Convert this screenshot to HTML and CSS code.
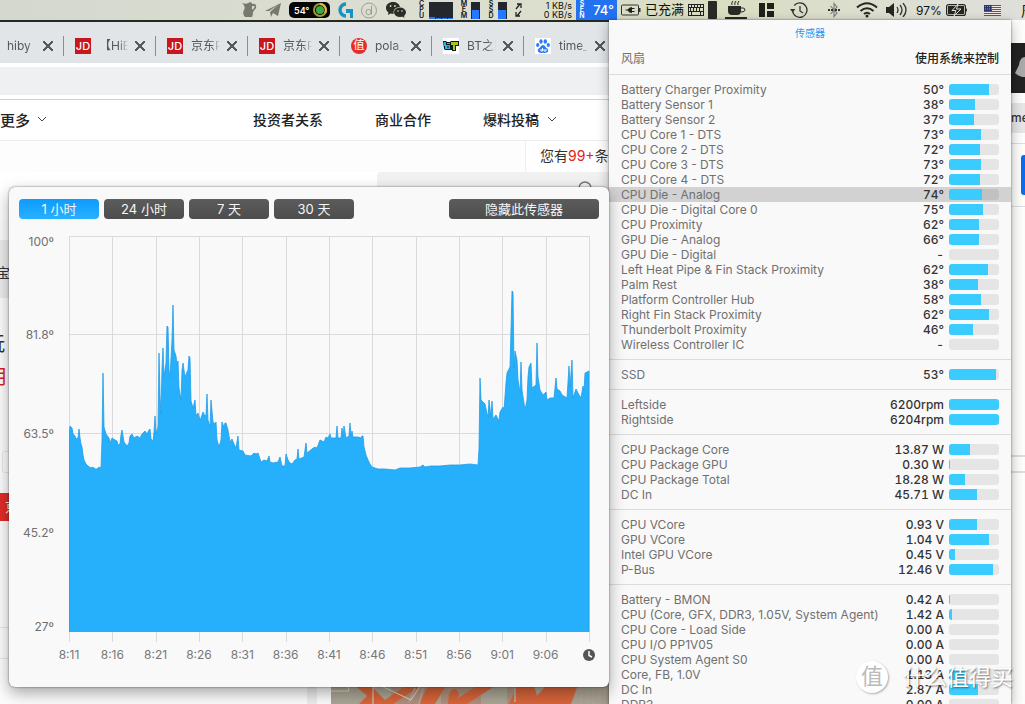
FILE: index.html
```html
<!DOCTYPE html>
<html lang="zh-CN">
<head>
<meta charset="utf-8">
<title>传感器</title>
<link rel="stylesheet" href="styles.css">
</head>
<body>
<div class="desktop">
  <header class="menubar">
    <svg class="after-8" width="16" height="18" viewBox="0 0 16 18"><path d="M1 2Q6 4 9 1l2 1v1q5-1 4 4l-3 4q0 3-1 5H4Q1 13 3 9 5 5 1 2Zm10 3v4q3-2 2.500-4Z" fill="#77786f" fill-rule="evenodd"/></svg>
    <svg class="after-8" width="16" height="16" viewBox="0 0 16 16"><path d="M0 9 16 1 13 14 8 11 6 15 5 10 13 3 4 9Z" fill="#77786f"/></svg>
    <span class="pill after-8">54°<svg width="15" height="15" viewBox="0 0 15 15"><circle cx="7" cy="7" r="6" fill="none" stroke="#a09a35" stroke-width="2"/><path d="M7 1a6 6 0 0 1 5 9" fill="none" stroke="#e8b93c" stroke-width="2"/><circle cx="7" cy="7" r="4" fill="#3cab45"/></svg></span>
    <svg class="after-8" width="15" height="16" viewBox="0 0 15 16"><path d="M8 2a6 6 0 1 0 0 12" fill="none" stroke="#1693c4" stroke-width="3.4"/><path d="M8 7h7v9h-3v-5H8Z" fill="#1693c4"/></svg>
    <svg class="after-8" width="17" height="17" viewBox="0 0 17 17"><circle cx="8" cy="8.500" r="7.500" fill="none" stroke="#9b9d93"/><circle cx="7.500" cy="10" r="2.600" fill="none" stroke="#9b9d93"/><path d="M10.500 3.500v9" stroke="#9b9d93"/></svg>
    <svg class="after-12" width="20" height="16" viewBox="0 0 20 16"><path d="M7 0C3 0 0 2.500 0 6c0 2 1 3.500 2.400 4.400L2 13l2.600-1.500 3 .4C7 7.500 10 5 14 5 13.500 2 10.500 0 7 0Z" fill="#2c2d27"/><ellipse cx="14" cy="10.300" rx="6" ry="4.800" fill="#2c2d27"/><path d="m16 14 2.400 2-.4-3Z" fill="#2c2d27"/><g fill="#d9dbcf"><circle cx="4.600" cy="4" r=".9"/><circle cx="9" cy="4" r=".9"/><circle cx="12" cy="9" r=".8"/><circle cx="16" cy="9" r=".8"/></g></svg>
    <span class="stack cpu after-4"><b>C</b><b>P</b><b>U</b></span>
    <svg class="after-8" width="24" height="17" viewBox="0 0 24 17"><path d="M0 0h24v17H0Z" fill="#24272b"/><path d="M0 15h6v2H0Zm7 1h5v1H7Zm6 0h5v1h-5Zm6 0h5v1h-5Z" fill="#2478ff"/></svg>
    <span class="stack after-4"><b>M</b><b>E</b><b>M</b></span>
    <svg class="after-8" width="9" height="17" viewBox="0 0 9 17"><path d="M0 0h9v17H0Z" fill="#24272b"/><path d="M1 8h7v9H1Z" fill="#2478ff"/></svg>
    <span class="stack after-4"><b>S</b><b>S</b><b>D</b></span>
    <svg class="after-8" width="9" height="17" viewBox="0 0 9 17"><path d="M0 0h9v17H0Z" fill="#24272b"/><path d="M0 8h8v9H0Z" fill="#2478ff"/></svg>
    <svg class="after-4" width="7" height="14" viewBox="0 0 7 14"><path d="M1 6 5 1M2 1h4v4M6 8 2 13M1 9v4h4" fill="none" stroke="#222" stroke-width="1.300"/></svg>
    <span class="rates after-4"><span>1 KB/s</span><span>0 KB/s</span></span>
    <span class="active after-4"><span class="stack"><b>S</b><b>E</b><b>N</b></span><span>74°</span></span>
    <svg class="after-4" width="20" height="12" viewBox="0 0 20 12"><rect x=".5" y="1" width="17" height="10" rx="1" fill="none" stroke="#333"/><path d="M18 4h1.500v4H18Z" fill="#333"/><path d="M4.500 5.500h2Q8 3 11 3v1h2.500v1H11v2h2.500v1H11v1Q8 9 6.500 6.500h-2Z" fill="#222"/></svg>
    <span class="charge after-4">已充满</span>
    <svg class="after-4" width="16" height="12" viewBox="0 0 16 12"><rect x=".5" y=".5" width="15" height="11" fill="none" stroke="#222"/><path d="M0 3.500h16M0 7.500h16M3.500 0v4M6.500 0v4M9.500 0v4M12.500 0v4M2.500 4v4M5.500 4v4M8.500 4v4M11.500 4v4M3.500 8v4M12.500 8v4" stroke="#222" fill="none"/></svg>
    <svg class="after-8" width="9" height="18" viewBox="0 0 9 18"><rect width="9" height="18" rx="1" fill="#292a25"/></svg>
    <svg class="after-12" width="22" height="18" viewBox="0 0 22 18"><path d="M3 5h13v5q0 4-4 4H7q-4 0-4-4ZM0 16h22v2H0Z" fill="#2a2b24"/><path d="M16 7h2q2 0 2 2t-4 2M7 4Q6 2 8 0M10 4Q9 2 11 0M13 4q-1-2 1-4" fill="none" stroke="#2a2b24"/></svg>
    <svg class="after-16" width="15" height="14" viewBox="0 0 15 14"><path d="M0 0h6v14H0ZM8 0h7v6H8Zm0 8h7v6H8Z" fill="#1f201c"/></svg>
    <svg class="after-20" width="18" height="17" viewBox="0 0 18 17"><path d="M2.600 9a7.200 7.200 0 1 0 1.600-5.500M10 4v5l3 2" fill="none" stroke="#333" stroke-width="1.300"/><path d="M0 7h5.400L2.600 10.500Z" fill="#333"/></svg>
    <svg class="after-16" width="12" height="16" viewBox="0 0 12 16"><path d="M2.500 4 9 11l-3 3.500v-13L9 5l-6.500 7" fill="none" stroke="#777" stroke-width="1.100"/><path d="M0 7h2v2H0Zm3 0h2v2H3Zm4 0h2v2H7Zm3 0h2v2h-2Z" fill="#333"/></svg>
    <svg class="after-8" width="22" height="16" viewBox="0 0 22 16"><path d="M1 5.500q10-8.500 20 0M4.500 9q6.500-5.500 13 0M8 12q3-2.500 6 0" fill="none" stroke="#252622" stroke-width="2"/><circle cx="11" cy="14" r="1.500" fill="#252622"/></svg>
    <svg class="after-8" width="22" height="14" viewBox="0 0 22 14"><path d="M0 4h3l5-4v14l-5-4H0Z" fill="#252622"/><path d="M11 4q2 3 0 6M14 2q4 5 0 10M17 0q6 7 0 14" fill="none" stroke="#333" stroke-width="1.300"/></svg>
    <span class="percent after-4">97%</span>
    <svg class="after-16" width="22" height="12" viewBox="0 0 22 12"><rect x=".6" y=".6" width="18.800" height="10.800" rx="2" fill="none" stroke="#252622" stroke-width="1.200"/><path d="M2 2h16v8H2Z" fill="#252622"/><path d="M20 4q2 2 0 4Z" fill="#252622"/><path d="m12 0-6 6.500h4L8 12l7-7h-4.500Z" fill="#252622" stroke="#dddfd0"/></svg>
    <svg class="after-20" width="17" height="11" viewBox="0 0 17 11"><path d="M0 0h17v11H0Z" fill="#f0e8e4"/><path d="M0 .5h17M0 2.500h17M0 4.500h17M0 6.500h17M0 8.500h17M0 10.500h17" stroke="#b5333f"/><path d="M0 0h8v6H0Z" fill="#2d356e"/><path d="M1 1.500h7M1 4h7" stroke="#9298b8" stroke-dasharray="1 1"/></svg>
    <span class="weekday">周</span>
  </header>

  <main class="browser">
    <div class="tabs">
      <div class="tab tab-cut"><span class="tab-title">hiby 评</span><button class="close" aria-label="关闭"></button></div>
      <div class="tab"><span class="fav jd">JD</span><span class="tab-title">【HiBy】</span><button class="close" aria-label="关闭"></button></div>
      <div class="tab"><span class="fav jd">JD</span><span class="tab-title">京东PLUS</span><button class="close" aria-label="关闭"></button></div>
      <div class="tab"><span class="fav jd">JD</span><span class="tab-title">京东PLUS</span><button class="close" aria-label="关闭"></button></div>
      <div class="tab"><span class="fav zhi">值</span><span class="tab-title">pola_搜</span><button class="close" aria-label="关闭"></button></div>
      <div class="tab"><svg class="fav" viewBox="0 0 16 16"><path d="M0 0h16v16H0Z" fill="#fff"/><path d="M0 3h3l1 1h3l1-1h8v5h-3v5H9v-1H2l-1-1Z" fill="#16191c"/><path d="M1 4h2v3h4v4H2V8H1Zm3 1h3v1H4Z" fill="#25b4ea"/><path d="M4 9h2" stroke="#16191c"/><path d="M8 4h7v3h-3v5h-2V7H8Z" fill="#a6c814"/></svg><span class="tab-title">BT之家</span><button class="close" aria-label="关闭"></button></div>
      <div class="tab"><svg class="fav" viewBox="0 0 16 16"><path d="M0 0h16v16H0Z" fill="#fff"/><g fill="#2a7bf6"><ellipse cx="6" cy="3.500" rx="1.700" ry="2.300"/><ellipse cx="10.300" cy="3.500" rx="1.700" ry="2.300"/><ellipse cx="2.700" cy="7" rx="1.600" ry="2.100"/><ellipse cx="13.300" cy="7" rx="1.600" ry="2.100"/><path d="M8 7q2 0 3 2.500 3 2 2 4-1 2-5 1.200-4 .8-5-1.200-1-2 2-4Q6 7 8 7Z"/></g><path d="M6 11v2h1.500v-3M9 11v2h2v-2" stroke="#fff" fill="none"/></svg><span class="tab-title">time_百</span><button class="close" aria-label="关闭"></button></div>
    </div>
    <div class="toolbar"><div class="bookmarks"></div></div>
    <nav class="site-nav">
      <a class="more" href="#">更多</a>
      <svg class="more-arrow" width="10" height="6" viewBox="0 0 10 6"><path d="m1 1 4 4 4-4" fill="none" stroke="#444"/></svg>
      <a class="nav-link" href="#">投资者关系</a>
      <a class="nav-link" href="#">商业合作</a>
      <a class="nav-link last" href="#">爆料投稿</a>
      <svg width="10" height="6" viewBox="0 0 10 6"><path d="m1 1 4 4 4-4" fill="none" stroke="#444"/></svg>
    </nav>
    <div class="notice-row"><p class="notice">您有<em>99+</em>条消息</p></div>
    <div class="search-panel"><svg width="18" height="18" viewBox="0 0 18 18"><circle cx="8" cy="8" r="6" fill="none" stroke="#777" stroke-width="1.500"/><path d="m12 12 5 5" stroke="#777" stroke-width="1.500"/></svg></div>
    <div class="feed">
      <aside class="feed-side">
        <p class="tag">宝</p>
        <p class="headline">玩</p>
        <p class="headline red">用</p>
        <p class="outline"></p>
        <p class="shop">京东</p>
        <p class="stub"></p>
      </aside>
      <div class="feed-rule"></div>
      <svg class="photo" viewBox="0 0 290 60" preserveAspectRatio="xMidYMax slice"><path d="M0 0h290v60H0Z" fill="#aaa595"/><path d="M60 40h40v20H60ZM110 40h40v20h-40ZM176 40h24v20h-24Z" fill="#b08f7c"/><path d="M20 38h26l-4 6 12 12 26-18h16L62 60H28l8-8ZM98 40h18l-12 20H88ZM152 38h18l-34 22h-18ZM178 60l10-22h14l4 14 12-14h20l-6 22ZM278 38h12v22h-10Z" fill="#d8653b"/><path d="M118 50q6-10 10 0l-3 10h-8ZM210 60l14-22h24l-8 22Z" fill="#d8653b"/><path d="M250 40v20M256 40v18M262 40v20M268 40v16M274 40v20M84 44l-6 14M92 44l-4 16M184 44v14" fill="none" stroke="#b5a493" stroke-width="2"/><path d="M0 47h18l-2-10M46 40l34 16 12-18M42 40v20" fill="none" stroke="#ddd8c8"/></svg>
    </div>
  </main>

  <aside class="side-window">
    <div class="side-dark"><svg width="12" height="26" viewBox="0 0 12 26"><path d="M12 2Q7 2 6 10l-4 8q4 4 10 4Z" fill="#aaa"/></svg></div>
    <div class="side-chip">me</div>
    <div class="side-blue"><i></i></div>
    <div class="side-gap"></div>
    <div class="side-box"></div>
  </aside>

  <section class="sensors" aria-label="传感器">
    <h1>传感器</h1>
    <div class="fan"><span>风扇</span><strong>使用系统来控制</strong></div>
    <table>
      <tr><th scope="row">Battery Charger Proximity</th><td>50°</td><td><div class="bar"><i style="width:80%"></i></div></td></tr>
      <tr><th scope="row">Battery Sensor 1</th><td>38°</td><td><div class="bar"><i style="width:52%"></i></div></td></tr>
      <tr><th scope="row">Battery Sensor 2</th><td>37°</td><td><div class="bar"><i style="width:50%"></i></div></td></tr>
      <tr><th scope="row">CPU Core 1 - DTS</th><td>73°</td><td><div class="bar"><i style="width:64%"></i></div></td></tr>
      <tr><th scope="row">CPU Core 2 - DTS</th><td>72°</td><td><div class="bar"><i style="width:62%"></i></div></td></tr>
      <tr><th scope="row">CPU Core 3 - DTS</th><td>73°</td><td><div class="bar"><i style="width:64%"></i></div></td></tr>
      <tr><th scope="row">CPU Core 4 - DTS</th><td>72°</td><td><div class="bar"><i style="width:62%"></i></div></td></tr>
      <tr class="selected"><th scope="row">CPU Die - Analog</th><td>74°</td><td><div class="bar"><i style="width:66%"></i></div></td></tr>
      <tr><th scope="row">CPU Die - Digital Core 0</th><td>75°</td><td><div class="bar"><i style="width:68%"></i></div></td></tr>
      <tr><th scope="row">CPU Proximity</th><td>62°</td><td><div class="bar"><i style="width:60%"></i></div></td></tr>
      <tr><th scope="row">GPU Die - Analog</th><td>66°</td><td><div class="bar"><i style="width:60%"></i></div></td></tr>
      <tr><th scope="row">GPU Die - Digital</th><td>-</td><td><div class="bar"></div></td></tr>
      <tr><th scope="row">Left Heat Pipe &amp; Fin Stack Proximity</th><td>62°</td><td><div class="bar"><i style="width:78%"></i></div></td></tr>
      <tr><th scope="row">Palm Rest</th><td>38°</td><td><div class="bar"><i style="width:58%"></i></div></td></tr>
      <tr><th scope="row">Platform Controller Hub</th><td>58°</td><td><div class="bar"><i style="width:64%"></i></div></td></tr>
      <tr><th scope="row">Right Fin Stack Proximity</th><td>62°</td><td><div class="bar"><i style="width:80%"></i></div></td></tr>
      <tr><th scope="row">Thunderbolt Proximity</th><td>46°</td><td><div class="bar"><i style="width:48%"></i></div></td></tr>
      <tr><th scope="row">Wireless Controller IC</th><td>-</td><td><div class="bar"></div></td></tr>
    </table>
    <table>
      <tr><th scope="row">SSD</th><td>53°</td><td><div class="bar"><i style="width:94%"></i></div></td></tr>
    </table>
    <table>
      <tr><th scope="row">Leftside</th><td>6200rpm</td><td><div class="bar"><i style="width:100%"></i></div></td></tr>
      <tr><th scope="row">Rightside</th><td>6204rpm</td><td><div class="bar"><i style="width:100%"></i></div></td></tr>
    </table>
    <table>
      <tr><th scope="row">CPU Package Core</th><td>13.87 W</td><td><div class="bar"><i style="width:42%"></i></div></td></tr>
      <tr><th scope="row">CPU Package GPU</th><td>0.30 W</td><td><div class="bar"><i style="width:2%"></i></div></td></tr>
      <tr><th scope="row">CPU Package Total</th><td>18.28 W</td><td><div class="bar"><i style="width:32%"></i></div></td></tr>
      <tr><th scope="row">DC In</th><td>45.71 W</td><td><div class="bar"><i style="width:56%"></i></div></td></tr>
    </table>
    <table>
      <tr><th scope="row">CPU VCore</th><td>0.93 V</td><td><div class="bar"><i style="width:56%"></i></div></td></tr>
      <tr><th scope="row">GPU VCore</th><td>1.04 V</td><td><div class="bar"><i style="width:80%"></i></div></td></tr>
      <tr><th scope="row">Intel GPU VCore</th><td>0.45 V</td><td><div class="bar"><i style="width:12%"></i></div></td></tr>
      <tr><th scope="row">P-Bus</th><td>12.46 V</td><td><div class="bar"><i style="width:88%"></i></div></td></tr>
    </table>
    <table>
      <tr><th scope="row">Battery - BMON</th><td>0.42 A</td><td><div class="bar"><i style="width:2%"></i></div></td></tr>
      <tr><th scope="row">CPU (Core, GFX, DDR3, 1.05V, System Agent)</th><td>1.42 A</td><td><div class="bar"><i style="width:6%"></i></div></td></tr>
      <tr><th scope="row">CPU Core - Load Side</th><td>0.00 A</td><td><div class="bar"></div></td></tr>
      <tr><th scope="row">CPU I/O PP1V05</th><td>0.00 A</td><td><div class="bar"></div></td></tr>
      <tr><th scope="row">CPU System Agent S0</th><td>0.00 A</td><td><div class="bar"></div></td></tr>
      <tr><th scope="row">Core, FB, 1.0V</th><td>1.13 A</td><td><div class="bar"><i style="width:32%"></i></div></td></tr>
      <tr><th scope="row">DC In</th><td>2.87 A</td><td><div class="bar"><i style="width:58%"></i></div></td></tr>
      <tr><th scope="row">DDR3</th><td>0.00 A</td><td><div class="bar"></div></td></tr>
    </table>
  </section>

  <section class="history" aria-label="CPU Die - Analog">
    <div class="ranges">
      <button class="range on">1 小时</button>
      <button class="range">24 小时</button>
      <button class="range">7 天</button>
      <button class="range">30 天</button>
      <button class="range hide">隐藏此传感器</button>
    </div>
    <div class="chart">
      <div class="y-axis"><span>100º</span><span>81.8º</span><span>63.5º</span><span>45.2º</span><span>27º</span></div>
      <svg class="plot" viewBox="69 236 521 406" preserveAspectRatio="none">
        <path d="M69 236.500H590M69 334.500H590M69 433.500H590M69 532.500H590M69.500 236V642M112.500 236V642M156.500 236V642M199.500 236V642M242.500 236V642M286.500 236V642M329.500 236V642M372.500 236V642M416.500 236V642M459.500 236V642M502.500 236V642M546.500 236V642M589.500 236V642" fill="none" stroke="#dadada"/>
        <path d="M69 632V438L70 426 72 428 73 434 75 436 76 439 78 438 79 429 80 438 81 444 82 447 83 455 84 460 86 464 88 466 91 468 93 467 95 469 97 469 99 467 101 468 102 440 103 373 104 427 106 434 109 438 110 443 112 438 115 440 117 441 118 445 120 444 121 435 122 430 124 442 127 446 129 443 130 436 132 434 134 438 137 436 140 438 142 434 145 431 147 434 149 430 150 429 151 439 153 441 154 432 155 416 156 434 158 427 159 353 160 395 161 414 162 368 163 348 164 377 166 363 167 326 168 327 169 370 170 377 172 340 173 305 174 350 176 356 177 365 178 361 179 388 181 400 182 370 183 363 185 377 187 372 188 370 189 356 190 358 191 401 193 408 195 400 196 416 198 413 200 420 201 418 203 412 205 416 206 415 207 394 208 420 210 427 211 400 213 422 215 424 216 422 217 440 219 447 221 440 222 422 224 427 225 423 226 423 228 430 230 442 232 439 234 444 236 448 238 436 239 450 243 451 245 455 251 456 254 453 256 454 258 453 261 462 264 460 267 461 269 456 270 462 273 463 278 462 280 457 282 466 285 466 286 454 288 460 290 463 292 464 295 460 297 459 298 449 299 459 304 457 306 443 307 453 312 449 315 447 317 448 320 440 324 442 326 437 328 438 330 434 331 438 336 438 337 426 338 438 341 438 342 428 343 437 344 426 346 438 349 436 350 423 351 436 352 431 353 437 358 437 361 438 362 436 363 436 364 447 366 455 368 460 370 464 372 467 378 469 385 469 395 470 400 468 410 468 420 467 423 465 425 467 431 466 440 466 450 465 460 465 470 464 478 465 479 449 480 378 481 400 485 404 488 418 489 400 491 417 492 401 493 419 496 415 499 421 500 412 503 407 504 410 506 383 507 373 510 367 511 330 512 291 513 292 514 368 515 351 517 360 518 380 520 393 521 362 522 390 525 410 527 400 528 377 529 367 531 363 532 388 536 385 537 343 538 377 540 390 543 395 546 392 547 400 550 398 554 398 556 378 557 389 560 391 562 395 567 398 569 366 570 387 572 360 573 398 576 389 578 393 581 398 583 386 584 391 585 373 589 371V632" fill="#26b0fc" stroke="#1f9de8" stroke-width=".8"/>
      </svg>
    </div>
    <div class="x-axis"><span>8:11</span><span>8:16</span><span>8:21</span><span>8:26</span><span>8:31</span><span>8:36</span><span>8:41</span><span>8:46</span><span>8:51</span><span>8:56</span><span>9:01</span><span>9:06</span><span><svg width="12" height="12" viewBox="0 0 12 12"><circle cx="6" cy="6" r="6" fill="#555"/><path d="M6 2v4.500l3 1.500" fill="none" stroke="#fff" stroke-width="1.500"/></svg></span></div>
  </section>

  <div class="watermark"><span class="seal">值</span><span>什么值得买</span></div>
</div>
</body>
</html>
```

FILE: styles.css
```css
* { box-sizing: border-box; }
body { margin: 0; font-family: Inter, "Noto Sans CJK SC", sans-serif; font-size: 12px; color: #333; }
h1, p { margin: 0; font-weight: 400; }
a { color: inherit; text-decoration: none; }
button { border: 0; padding: 0; font: inherit; }
svg { display: block; flex: none; }

.desktop { position: relative; display: flex; flex-direction: column; height: 100vh; overflow: hidden; background: #26291d; }

/* Menu bar */
.menubar { display: flex; align-items: center; justify-content: flex-end; height: 20px; flex: none; overflow: hidden; color: #111; background: linear-gradient(90deg, #d5d8cf, #dcdfd0 45%, #d9dec3 70%, #dfdfdb); white-space: nowrap; }
.menubar > * { flex: none; }
.after-4 { margin-right: 4px; }
.after-8 { margin-right: 8px; }
.after-12 { margin-right: 12px; }
.after-16 { margin-right: 16px; }
.after-20 { margin-right: 20px; }
.pill { display: flex; align-items: center; justify-content: space-between; width: 41px; height: 16px; padding: 0 2px 0 5px; border-radius: 5px; background: #050505; color: #fff; font-size: 9px; font-weight: 600; }
.stack { display: flex; flex-direction: column; align-items: center; width: 6px; font-size: 7px; line-height: 6px; }
.stack.cpu { width: 7px; }
.stack b { font-weight: 600; }
.rates { display: flex; flex-direction: column; align-items: flex-end; width: 46px; font-size: 9px; line-height: 9px; }
.active { display: flex; align-items: center; justify-content: space-between; width: 41px; height: 20px; padding: 0 3px; background: #2272f2; color: #fff; font-size: 13px; font-weight: 500; }
.charge { font-size: 13px; line-height: 16px; padding-bottom: 2px; }
.percent { width: 26px; font-size: 12px; }
.weekday { width: 4px; overflow: hidden; font-size: 14px; }

/* Browser window */
.browser { display: flex; flex-direction: column; flex: 1; min-height: 0; margin-top: 2px; overflow: hidden; background: #fff; }
.tabs { display: flex; height: 41px; flex: none; padding-top: 14px; background: #e1e5e8; overflow: hidden; }
.tab { display: flex; align-items: center; flex: none; width: 92px; height: 20px; padding-left: 11px; border-right: 1px solid #888d91; }
.tab:last-child { border: 0; }
.tab-cut { width: 64px; padding-left: 7px; }
.fav { width: 16px; height: 16px; margin-right: 8px; flex: none; }
.jd { background: #c8161d; color: #fff; font-size: 11px; font-weight: 500; line-height: 16px; text-align: center; }
.zhi { border-radius: 50%; background: #e62d28; color: #fff; font-size: 11px; line-height: 15px; text-align: center; }
.tab-title { width: 29px; overflow: hidden; white-space: nowrap; color: #55595e; line-height: 18px; mask-image: linear-gradient(90deg, #000 70%, transparent); }
.close { width: 10px; height: 10px; margin-left: 7px; background: linear-gradient(45deg, transparent 43%, #555a5f 43% 57%, transparent 57%), linear-gradient(-45deg, transparent 43%, #555a5f 43% 57%, transparent 57%); }
.toolbar { flex: none; padding: 4px 0; border-bottom: 1px solid #cfcfcf; }
.bookmarks { height: 28px; background: #eef0f2; }
.site-nav { display: flex; align-items: center; flex: none; height: 41px; padding-bottom: 2px; border-bottom: 1px solid #eee; color: #222; font-size: 14px; font-weight: 500; white-space: nowrap; }
.more { width: 30px; font-size: 15px; }
.more-arrow { margin-left: 7px; margin-right: 206px; }
.nav-link { margin-right: 52px; }
.nav-link.last { margin-right: 8px; }
.notice-row { display: flex; flex: none; padding-left: 525px; background: #fdfdfd; }
.notice { flex: 1; height: 31px; padding-left: 14px; border-left: 1px solid #eee; background: #fff; font-size: 14px; line-height: 30px; white-space: nowrap; }
.notice em { color: #e2231a; font-style: normal; }
.search-panel { flex: none; height: 48px; margin-left: 377px; padding: 8px 0 0 200px; border-radius: 3px 0 0; background: #f1f1f1; }
.feed { display: flex; flex: 1; min-height: 0; padding-top: 20px; background: #fdfdfd; }
.feed-side { width: 307px; flex: none; overflow: hidden; }
.tag { height: 58px; padding-top: 22px; background: #ededed; font-size: 14px; text-indent: -4px; }
.headline { margin-top: 32px; font-size: 20px; line-height: 28px; text-indent: -15px; }
.headline.red { margin-top: 5px; color: #d71f1f; text-indent: -13px; }
.outline { height: 22px; margin: 60px 0 20px 2px; border: 1px solid #e8e8e8; border-radius: 3px; }
.shop { height: 28px; padding-left: 5px; background: #e12d27; color: #fff; font-size: 14px; line-height: 28px; }
.stub { height: 32px; margin-top: 106px; border: solid #e8e8e8; border-width: 1px 0; }
.feed-rule { width: 10px; background: #eee; flex: none; }
.photo { width: 290px; height: 60px; margin-left: 14px; align-self: flex-end; }

/* Window edge behind the sensor menu */
.side-window { position: absolute; top: 20px; right: 0; bottom: 0; width: 14px; padding-top: 23px; background: #fdfdfc; overflow: hidden; }
.side-dark { display: flex; align-items: center; justify-content: flex-end; height: 50px; background: #222; }
.side-chip { height: 30px; margin: 10px 0; background: #e6e6e6; font-weight: 500; line-height: 30px; }
.side-blue { height: 64px; padding: 11px 0 0 10px; border: solid #ddd; border-width: 1px 0; }
.side-blue i { display: block; height: 40px; border-radius: 3px 0 0 3px; background: #0a6cf0; }
.side-gap { height: 248px; border-top: 1px solid #fff; }
.side-box { height: 18px; border: solid #ddd; border-width: 2px 0; }

/* Sensor menu */
.sensors { position: absolute; top: 20px; right: 14px; bottom: 0; width: 402px; overflow: hidden; background: #f9f9f9; box-shadow: 0 0 2px rgba(0,0,0,.5), 0 4px 12px rgba(0,0,0,.3); }
.sensors h1 { padding-top: 6px; color: #1b9af7; font-size: 10px; line-height: 15px; text-align: center; }
.fan { display: flex; align-items: center; justify-content: space-between; height: 33px; padding: 0 12px; color: #707070; }
.fan strong { color: #222; font-size: 12px; font-weight: 500; }
.sensors table { display: flex; flex-direction: column; padding: 7px 0; border-top: 1px solid #dcdcdc; }
.sensors tbody { display: contents; }
.sensors tr { display: flex; align-items: center; gap: 5px; height: 15px; padding: 0 12px; white-space: nowrap; }
.sensors th { flex: 1; padding: 0; color: #707070; font-weight: 400; line-height: 15px; text-align: left; }
.sensors td { padding: 0; color: #333; font-weight: 500; font-variant-numeric: tabular-nums; line-height: 15px; }
.sensors .selected { background: #d2d2d2; }
.bar { width: 50px; height: 11px; border-radius: 3px; overflow: hidden; background: rgba(0,0,0,.08); }
.bar i { display: block; height: 11px; background: #3accff; }

/* History popover */
.history { position: absolute; top: 187px; left: 9px; right: 416px; padding: 12px 0 24px; border-radius: 6px; background: #f9f9f9; box-shadow: 0 0 2px rgba(0,0,0,.6), 0 6px 16px rgba(0,0,0,.35); }
.ranges { display: flex; gap: 5px; padding: 0 10px; }
.range { width: 80px; height: 20px; border-radius: 4px; background: linear-gradient(#5c5c5c, #4d4d4d); color: #f6f6f6; font-size: 13px; line-height: 18px; }
.range.on { background: linear-gradient(#0d9bff, #29b0ff); }
.range.hide { width: 150px; margin-left: auto; }
.chart { display: flex; margin-top: 15px; padding-right: 19px; color: #6f6f6f; }
.y-axis { display: grid; grid-template-rows: 51px 99px 99px 99px 53px; align-items: center; width: 45px; margin-right: 15px; line-height: 16px; text-align: right; }
.y-axis span:first-child { align-self: start; }
.y-axis span:last-child { align-self: end; }
.plot { flex: 1; width: 0; height: 406px; margin-top: 2px; }
.x-axis { display: flex; justify-content: space-between; margin-top: 5px; padding-left: 40px; color: #777; line-height: 16px; }
.x-axis span { display: flex; align-items: center; justify-content: center; width: 40px; height: 16px; }

.watermark { position: absolute; right: 12px; bottom: 10px; display: flex; align-items: center; gap: 15px; color: #fff; font-size: 22px; line-height: 34px; text-shadow: 1px 1px 2px rgba(0,0,0,.5); }
.seal { width: 32px; height: 32px; border-radius: 50%; background: #fff; box-shadow: 1px 1px 2px rgba(0,0,0,.3); color: #bbb; line-height: 30px; text-align: center; text-shadow: none; }
```
